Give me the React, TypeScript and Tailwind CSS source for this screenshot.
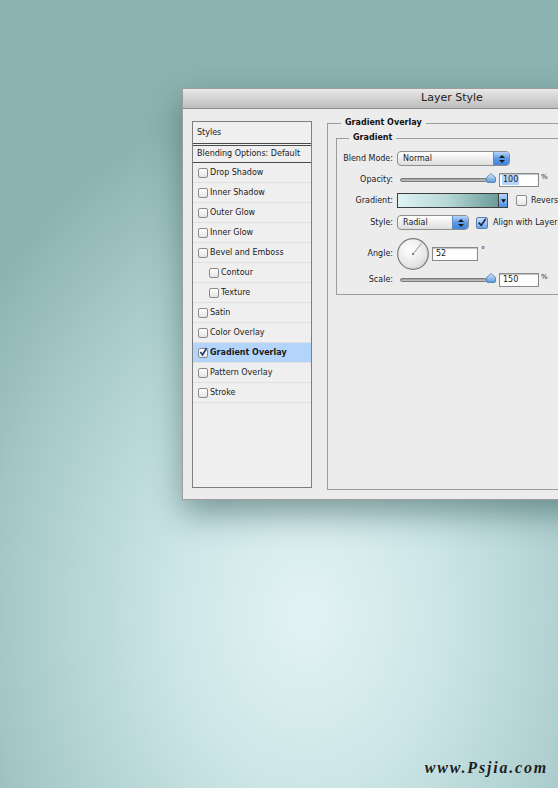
import React from "react";

interface Effect {
  name: string;
  indent?: boolean;
  checked?: boolean;
  active?: boolean;
}

const effects: Effect[] = [
  { name: "Drop Shadow" },
  { name: "Inner Shadow" },
  { name: "Outer Glow" },
  { name: "Inner Glow" },
  { name: "Bevel and Emboss" },
  { name: "Contour", indent: true },
  { name: "Texture", indent: true },
  { name: "Satin" },
  { name: "Color Overlay" },
  { name: "Gradient Overlay", checked: true, active: true },
  { name: "Pattern Overlay" },
  { name: "Stroke" },
];

const Check = ({ checked, size = 10 }: { checked?: boolean; size?: number }) => (
  <div
    className="relative shrink-0 rounded-[2px] border border-[#8a8a8a] bg-gradient-to-b from-white to-[#e4e4e4]"
    style={{ width: size, height: size }}
  >
    {checked && (
      <svg viewBox="0 0 10 10" className="absolute -top-[1px] left-0 h-[9px] w-[9px] overflow-visible">
        <path d="M1.5 4.5 L4 7.5 L8.5 0" fill="none" stroke="#1d3f75" strokeWidth="1.8" />
      </svg>
    )}
  </div>
);

const Stepper = () => (
  <div className="flex h-full w-[16px] flex-col items-center justify-center gap-[2px] rounded-r-[3px] border-l border-[#5f8fc6] bg-gradient-to-b from-[#b6d6fb] via-[#5d9be6] to-[#3f84dc]">
    <svg viewBox="0 0 6 3" className="h-[3px] w-[6px]">
      <path d="M3 0 L6 3 H0 Z" fill="#1b1b1b" />
    </svg>
    <svg viewBox="0 0 6 3" className="h-[3px] w-[6px]">
      <path d="M0 0 H6 L3 3 Z" fill="#1b1b1b" />
    </svg>
  </div>
);

const Thumb = () => (
  <svg viewBox="0 0 10 10" className="-ml-[1px] -mt-[4px] h-[10px] w-[10px] shrink-0">
    <defs>
      <linearGradient id="thumbg" x1="0" y1="0" x2="0" y2="1">
        <stop offset="0" stopColor="#d6e9fb" />
        <stop offset="1" stopColor="#5c9ad9" />
      </linearGradient>
    </defs>
    <path d="M5 0.5 L9.5 4.5 V8 Q9.5 9.5 8 9.5 H2 Q0.5 9.5 0.5 8 V4.5 Z" fill="url(#thumbg)" stroke="#4a79ad" strokeWidth="0.8" />
  </svg>
);

const Slider = () => (
  <div className="ml-[3px] flex items-center">
    <div className="h-[4px] w-[87px] rounded-full border border-[#7c7c7c] bg-gradient-to-b from-[#9a9a9a] to-[#c8c8c8]" />
    <Thumb />
  </div>
);

const NumInput = ({ value, width, selected }: { value: string; width: number; selected?: boolean }) => (
  <div
    className="flex h-[14px] items-center border border-[#8a8a8a] bg-white pl-[2px] shadow-[inset_0_1px_1px_rgba(0,0,0,0.25)]"
    style={{ width }}
  >
    <span className={selected ? "bg-[#b5d5fd] px-[1px] leading-[10px]" : "px-[1px] leading-[10px]"}>{value}</span>
  </div>
);

const Row = ({ label, children, className }: { label: string; children: React.ReactNode; className: string }) => (
  <div className={"flex items-center " + className}>
    <div className="w-[56px] shrink-0 text-right">{label}</div>
    <div className="ml-[4px] flex items-center">{children}</div>
  </div>
);

const Dial = () => (
  <svg viewBox="0 0 32 32" className="h-[32px] w-[32px]">
    <defs>
      <radialGradient id="dialg" cx="0.4" cy="0.35" r="0.75">
        <stop offset="0" stopColor="#ffffff" />
        <stop offset="0.7" stopColor="#e6e6e6" />
        <stop offset="1" stopColor="#c9c9c9" />
      </radialGradient>
    </defs>
    <circle cx="16" cy="16" r="15.3" fill="url(#dialg)" stroke="#7b7b7b" strokeWidth="1.2" />
    <line x1="16" y1="16" x2="24.5" y2="5.5" stroke="#777" strokeWidth="0.8" />
    <circle cx="16" cy="16" r="1" fill="#666" />
  </svg>
);

const GroupHeader = ({ title, lead }: { title: string; lead: number }) => (
  <div className="flex h-[12px] items-stretch">
    <div className="mt-[6px] border-l border-t border-[#9b9b9b]" style={{ width: lead }} />
    <div className="px-[4px] font-bold leading-[12px] text-[#111]">{title}</div>
    <div className="mt-[6px] flex-1 border-r border-t border-[#9b9b9b]" />
  </div>
);

export default function App() {
  return (
    <div
      className="relative h-[788px] w-[558px] overflow-hidden bg-[radial-gradient(ellipse_72%_66%_at_55%_78%,#e3f3f4_0%,#cbe5e6_35%,#a9cbcb_72%,#8cb3b2_100%)] pl-[182px] pt-[88px]"
      style={{ fontFamily: '"DejaVu Sans", "Liberation Sans", sans-serif' }}
    >
      <div className="flex h-[412px] w-[540px] flex-col border border-[#9d9d9d] bg-[#ececec] text-[8px] text-[#1a1a1a] shadow-[0_14px_30px_rgba(20,60,60,0.45)]">
        {/* title bar */}
        <div className="flex h-[20px] shrink-0 items-center justify-center border-b border-[#8c8c8c] bg-gradient-to-b from-[#e8e8e8] to-[#bdbdbd] text-[11px] text-[#222]">
          Layer Style
        </div>

        <div className="flex flex-1 gap-[15px] pl-[9px] pt-[12px]">
          {/* styles list */}
          <div className="flex h-[367px] w-[120px] shrink-0 flex-col border border-[#7e7e7e] bg-[#efefef]">
            <div className="flex h-[21px] items-center pl-[4px]">Styles</div>
            <div className="border-b-[3px] border-double border-[#4a4a4a]" />
            <div className="flex h-[17px] items-center border-b border-[#4a4a4a] pl-[4px]">
              Blending Options: Default
            </div>
            {effects.map((e) => (
              <div
                key={e.name}
                className={
                  "flex h-[20px] items-center gap-[2px] border-b border-[#e0e0e0] pt-[1px] " +
                  (e.indent ? "pl-[16px] " : "pl-[5px] ") +
                  (e.active ? "bg-[#b3d5fb] font-bold" : "")
                }
              >
                <Check checked={e.checked} />
                <span>{e.name}</span>
              </div>
            ))}
          </div>

          {/* settings */}
          <div className="-mt-[4px] flex flex-1 flex-col pr-[10px]">
            <GroupHeader title="Gradient Overlay" lead={14} />
            <div className="h-[361px] border-b border-l border-r border-[#9b9b9b] pl-[8px] pr-[8px] pt-[3px]">
              <GroupHeader title="Gradient" lead={13} />
              <div className="flex h-[151px] flex-col border-b border-l border-r border-[#9b9b9b]">
                <Row label="Blend Mode:" className="mt-[7px] h-[15px]">
                  <div className="flex h-[15px] w-[113px] items-center justify-between rounded-[4px] border border-[#8d8d8d] bg-gradient-to-b from-white to-[#dedede]">
                    <span className="pl-[5px]">Normal</span>
                    <Stepper />
                  </div>
                </Row>
                <Row label="Opacity:" className="mt-[7px] h-[14px]">
                  <Slider />
                  <div className="ml-[3px] flex items-start">
                    <NumInput value="100" width={40} selected />
                    <span className="ml-[2px] -mt-[1px] text-[7px]">%</span>
                  </div>
                </Row>
                <Row label="Gradient:" className="mt-[6px] h-[15px]">
                  <div className="flex h-[15px] border border-[#3e3e3e]">
                    <div className="w-[100px] bg-gradient-to-r from-[#e0f3f3] via-[#b6d7d6] to-[#6a9c98]" />
                    <div className="flex w-[9px] items-center justify-center border-l border-[#3e3e3e] bg-gradient-to-b from-[#b6d6fb] to-[#4a8ee0]">
                      <svg viewBox="0 0 6 4" className="h-[4px] w-[5px]">
                        <path d="M0 0 H6 L3 4 Z" fill="#111" />
                      </svg>
                    </div>
                  </div>
                  <div className="ml-[8px]">
                    <Check size={11} />
                  </div>
                  <span className="ml-[4px] whitespace-nowrap">Reverse</span>
                </Row>
                <Row label="Style:" className="mt-[7px] h-[15px]">
                  <div className="flex h-[15px] w-[72px] items-center justify-between rounded-[4px] border border-[#8d8d8d] bg-gradient-to-b from-white to-[#dedede]">
                    <span className="pl-[5px]">Radial</span>
                    <Stepper />
                  </div>
                  <div className="ml-[7px] flex h-[12px] w-[12px] items-center justify-center rounded-[2px] border border-[#5a7ea8] bg-gradient-to-b from-[#c9e1fb] to-[#6fa6e6]">
                    <svg viewBox="0 0 12 12" className="h-[11px] w-[11px]">
                      <path d="M2 6 L5 9.5 L10.5 1.5" fill="none" stroke="#13294d" strokeWidth="2" />
                    </svg>
                  </div>
                  <span className="ml-[5px] whitespace-nowrap">Align with Layer</span>
                </Row>
                <Row label="Angle:" className="mt-[8px] h-[32px]">
                  <Dial />
                  <div className="ml-[3px] flex items-start">
                    <NumInput value="52" width={46} />
                    <span className="ml-[3px] -mt-[2px] text-[8px]">°</span>
                  </div>
                </Row>
                <Row label="Scale:" className="mt-[3px] h-[14px]">
                  <Slider />
                  <div className="ml-[3px] flex items-start">
                    <NumInput value="150" width={40} />
                    <span className="ml-[2px] -mt-[1px] text-[7px]">%</span>
                  </div>
                </Row>
              </div>
            </div>
          </div>
        </div>
      </div>

      <div
        className="absolute bottom-[8px] right-[10px] text-[16px] font-bold italic tracking-[1.8px] text-[#1e1e1e]"
        style={{ fontFamily: '"Liberation Serif", "DejaVu Serif", serif' }}
      >
        www.Psjia.com
      </div>
    </div>
  );
}
